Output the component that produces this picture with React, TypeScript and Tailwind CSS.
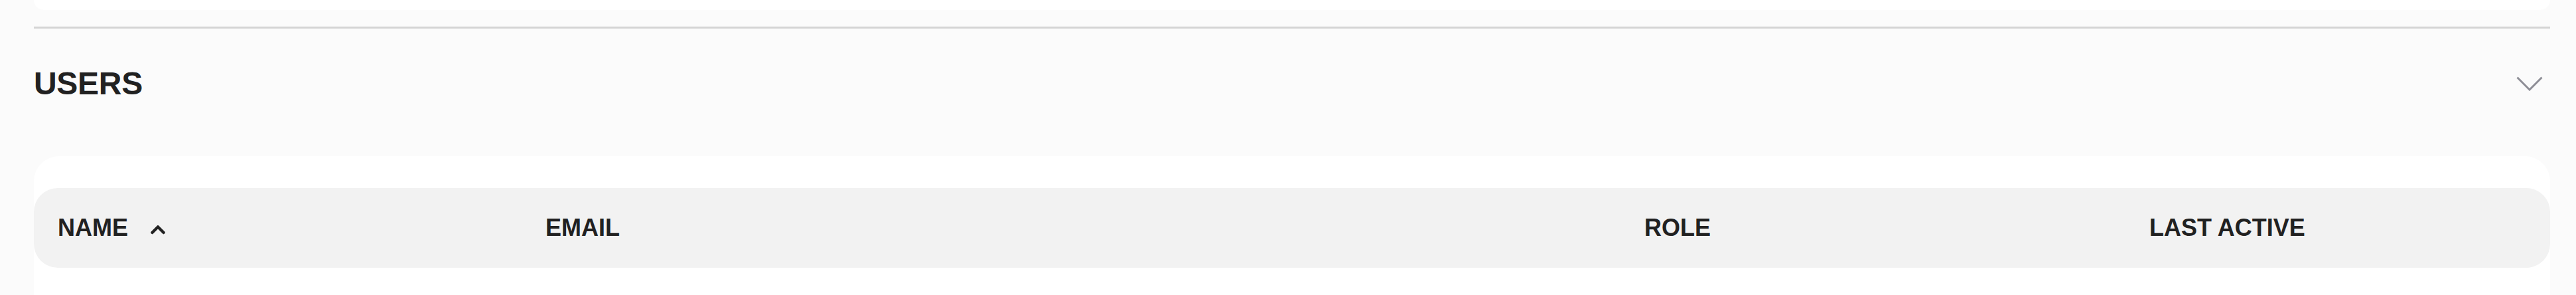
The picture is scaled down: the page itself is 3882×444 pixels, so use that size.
import React from "react";

const font = { fontFamily: '"Liberation Sans", Arial, Helvetica, sans-serif' };

export default function App() {
  const cols = ["EMAIL", "ROLE", "LAST ACTIVE"];
  return (
    <div className="min-h-screen bg-[#fbfbfb] pl-[51px] pr-[39px] text-[#212121]" style={font}>
      <div className="h-[15px] rounded-b-[48px] bg-white" />
      <div className="mt-[25px] h-[3px] bg-[#d4d4d4]" />
      <div className="mt-[43px] flex h-[80px] items-center justify-between">
        <h2 className="text-[48px] font-bold leading-[48px] tracking-[-0.3px]">USERS</h2>
        <button className="mr-[11px] flex items-center" aria-label="Collapse">
          <svg width="40" height="22" viewBox="0 0 40 22" fill="none">
            <path d="M1.5 1.5 L20 20 L38.5 1.5" stroke="#8e8e96" strokeWidth="3" strokeLinejoin="miter" />
          </svg>
        </button>
      </div>
      <div className="mt-[69px] rounded-t-[38px] bg-white pt-[48px] pb-[80px]">
        <div className="grid h-[120px] grid-cols-[735px_1656px_761px_1fr] items-center rounded-[36px] bg-[#f2f2f2] pl-[36px] text-[36px] font-bold leading-none">
          <div className="flex items-center">
            <span>NAME</span>
            <svg className="ml-[34px] mt-[3px]" width="22" height="17" viewBox="0 0 22 17" fill="none">
              <path d="M2.5 14 L11 5.5 L19.5 14" stroke="#222222" strokeWidth="4.5" strokeLinecap="round" strokeLinejoin="round" />
            </svg>
          </div>
          {cols.map((c) => (
            <div key={c}>{c}</div>
          ))}
        </div>
      </div>
    </div>
  );
}
